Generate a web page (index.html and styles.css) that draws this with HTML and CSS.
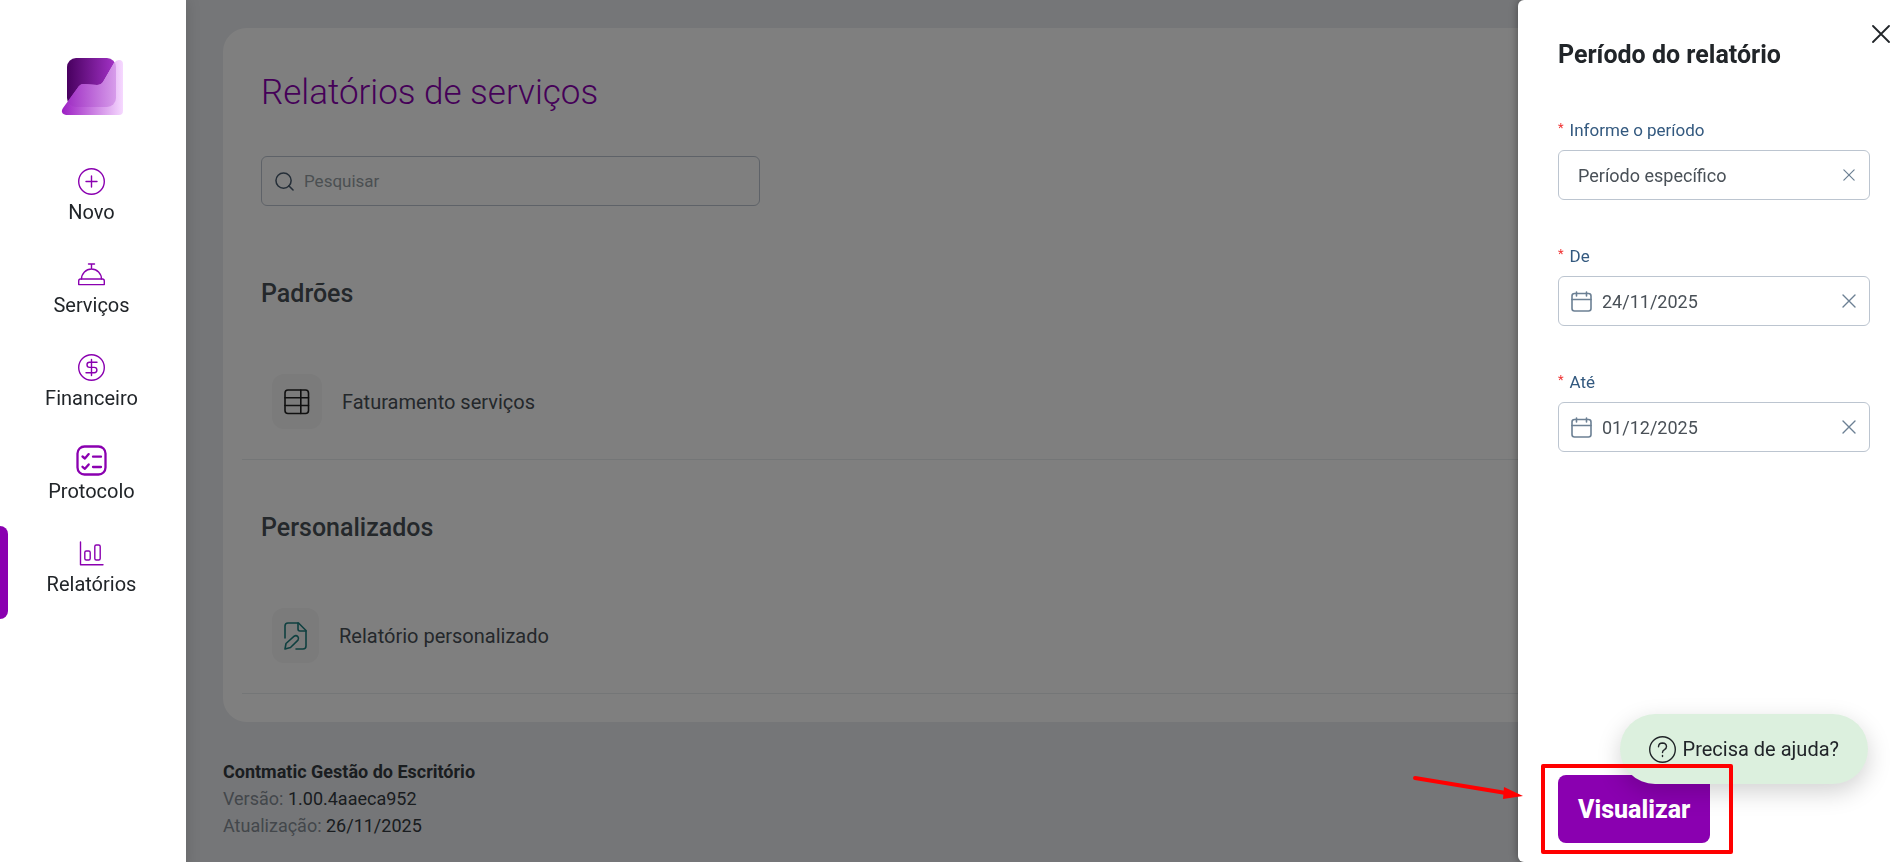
FILE: index.html
```html
<!DOCTYPE html>
<html lang="pt-BR">
<head>
    <meta charset="UTF-8">
    <meta name="viewport" content="width=device-width, initial-scale=1.0">
    <title>Relatórios de serviços</title>
    <link rel="stylesheet" href="styles.css">
</head>
<body>

<!-- Sidebar -->
<aside class="sidebar">
    <a href="#" class="logo" aria-label="Início">
        <svg width="62" height="58" viewBox="0 0 62 58">
            <defs>
                <linearGradient id="logo-back" x1="0" x2="1">
                    <stop offset="0" stop-color="#48005f"/>
                    <stop offset="1" stop-color="#a433c8"/>
                </linearGradient>
                <linearGradient id="logo-front" x1="0" x2="1">
                    <stop offset="0" stop-color="#9c1fc3"/>
                    <stop offset="1" stop-color="#f6d9ff"/>
                </linearGradient>
                <linearGradient id="logo-mix" x1="0" x2="1">
                    <stop offset="0" stop-color="#9a24c0"/>
                    <stop offset="1" stop-color="#dfacf0"/>
                </linearGradient>
                <clipPath id="logo-clip">
                    <rect x="6" y="0" width="49" height="49" rx="9"/>
                </clipPath>
            </defs>
            <rect x="6" y="0" width="49" height="49" rx="9" fill="url(#logo-back)"/>
            <path d="M2 50 L18 28 Q20 26 22 26 L36 27 Q40 27 42 24 L53 5 Q55 2 58 2 Q62 2 62 6 V53 Q62 57 58 57 H5 Q0 56 1 52 Z" fill="url(#logo-front)"/>
            <path d="M2 50 L18 28 Q20 26 22 26 L36 27 Q40 27 42 24 L53 5 Q55 2 58 2 Q62 2 62 6 V53 Q62 57 58 57 H5 Q0 56 1 52 Z" fill="url(#logo-mix)" clip-path="url(#logo-clip)"/>
        </svg>
    </a>
    <nav class="menu">
        <a href="#" class="menu-item">
            <svg class="menu-icon" viewBox="0 0 27 27">
                <circle cx="13.5" cy="13.5" r="12.8"/>
                <path d="M13.5 8v11M8 13.5h11"/>
            </svg>
            Novo
        </a>
        <a href="#" class="menu-item">
            <svg class="menu-icon" viewBox="0 0 27 27">
                <path d="M10.5 3h6M13.5 3v5M3.5 18a10 10 0 0 1 20 0"/>
                <path d="M2.6 18h21.8q1.9 0 1.9 2v3.6H.7V20q0-2 1.9-2z"/>
            </svg>
            Serviços
        </a>
        <a href="#" class="menu-item">
            <svg class="menu-icon" viewBox="0 0 27 27">
                <circle cx="13.5" cy="13.5" r="12.8"/>
                <path d="M13.5 5.5v16M19 8.2h-7.4a2.6 2.6 0 0 0 0 5.2h4.6a2.7 2.7 0 0 1 0 5.4H8"/>
            </svg>
            Financeiro
        </a>
        <a href="#" class="menu-item">
            <svg class="menu-icon menu-icon-large" viewBox="0 0 27 27">
                <rect x="-.5" y="-.5" width="28" height="28" rx="7"/>
                <path d="M4.500 9.500l2.400 2 3.800-4.400M4.500 19.800l2.400 2 3.800-4.400M15 9.700h8M15 20h8"/>
            </svg>
            Protocolo
        </a>
        <a href="#" class="menu-item active">
            <svg class="menu-icon" viewBox="0 0 27 27">
                <path d="M2.500 2v22.700H25"/>
                <rect x="6.800" y="11" width="5.400" height="9" rx="1.500"/>
                <rect x="16.800" y="5" width="5.400" height="15" rx="1.500"/>
            </svg>
            Relatórios
        </a>
    </nav>
</aside>

<!-- Page content -->
<main class="content">
    <section class="card">
        <h1>Relatórios de serviços</h1>
        <div class="search">
            <svg width="19" height="19" viewBox="0 0 20 20">
                <circle cx="9" cy="9" r="8"/>
                <path d="M14.5 14.5L19 19"/>
            </svg>
            <input type="text" placeholder="Pesquisar" aria-label="Pesquisar">
        </div>

        <h2>Padrões</h2>
        <a href="#" class="report">
            <span class="report-icon">
                <svg width="26" height="26" viewBox="0 0 26 26">
                    <rect x="1" y="1" width="23.500" height="23.500" rx="3"/>
                    <path d="M1 8.700h23.500M1 16.500h23.500M16.800 1v23.500"/>
                </svg>
            </span>
            Faturamento serviços
        </a>

        <h2>Personalizados</h2>
        <a href="#" class="report">
            <span class="report-icon report-icon-custom">
                <svg width="23" height="28" viewBox="0 0 23 28">
                    <path d="M1 16V4q0-3 3-3h10.500l7.500 7.500V24q0 3-3 3h-7"/>
                    <path d="M14 1v6q0 2 2 2h6"/>
                    <path d="M1 27l1-5.500 8.200-7.300q2-1.200 3.600.4 1.400 1.700.2 3.500L6.500 25.500z"/>
                </svg>
            </span>
            Relatório personalizado
        </a>
    </section>

    <footer class="version">
        <strong>Contmatic Gestão do Escritório</strong>
        <p><span>Versão:</span> 1.00.4aaeca952</p>
        <p><span>Atualização:</span> 26/11/2025</p>
    </footer>
</main>

<div class="overlay"></div>

<!-- Report period drawer -->
<form class="drawer">
    <button type="button" class="close" aria-label="Fechar">
        <svg width="18" height="18" viewBox="0 0 18 18"><path d="M1 1l16 16M17 1L1 17"/></svg>
    </button>
    <h3>Período do relatório</h3>

    <div class="field">
        <label for="periodo"><sup>*</sup>Informe o período</label>
        <div class="control">
            <select id="periodo">
                <option>Período específico</option>
            </select>
            <button type="button" class="clear" aria-label="Limpar período">
                <svg width="12" height="12" viewBox="0 0 14 14"><path d="M1 1l12 12M13 1L1 13"/></svg>
            </button>
        </div>
    </div>

    <div class="field">
        <label for="de"><sup>*</sup>De</label>
        <div class="control control-date">
            <svg class="calendar" width="21" height="21" viewBox="0 0 21 21">
                <rect x="1" y="2.500" width="19" height="17.500" rx="2.500"/>
                <path d="M1 8.500h19M5.500 1v4M15.500 1v4"/>
            </svg>
            <input type="text" id="de" value="24/11/2025">
            <button type="button" class="clear" aria-label="Limpar data inicial">
                <svg width="14" height="14" viewBox="0 0 14 14"><path d="M1 1l12 12M13 1L1 13"/></svg>
            </button>
        </div>
    </div>

    <div class="field">
        <label for="ate"><sup>*</sup>Até</label>
        <div class="control control-date">
            <svg class="calendar" width="21" height="21" viewBox="0 0 21 21">
                <rect x="1" y="2.500" width="19" height="17.500" rx="2.500"/>
                <path d="M1 8.500h19M5.500 1v4M15.500 1v4"/>
            </svg>
            <input type="text" id="ate" value="01/12/2025">
            <button type="button" class="clear" aria-label="Limpar data final">
                <svg width="14" height="14" viewBox="0 0 14 14"><path d="M1 1l12 12M13 1L1 13"/></svg>
            </button>
        </div>
    </div>

    <div class="actions">
        <button type="submit" class="submit">Visualizar</button>
    </div>
</form>

<button type="button" class="help">
    <svg width="27" height="27" viewBox="0 0 27 27">
        <circle cx="13.500" cy="13.500" r="12.800"/>
        <path d="M9.500 10.800q.2-3.800 4-3.800 3.900.2 4 3.600 0 1.900-2 3-2 1-2 3"/>
        <path d="M13.500 19.500v1"/>
    </svg>
    Precisa de ajuda?
</button>

<!-- Click marker -->
<div class="highlight">
    <svg class="arrow" width="112" height="28" viewBox="0 0 112 28">
        <path d="M3 4L94 19" stroke="#ff0000" stroke-width="4"/>
        <path d="M92 13L111 22L91 25Z" fill="#ff0000"/>
    </svg>
</div>

</body>
</html>
```

FILE: styles.css
```css
* {
    box-sizing: border-box;
}
body {
    font-family: Roboto, Arial, sans-serif;
    font-size: 18px;
    color: #212529;
    display: flex;
    min-height: 100vh;
    margin: 0;
    background-color: #ebedf1;
    overflow: hidden;
}
a {
    color: inherit;
    text-decoration: none;
}
button {
    font-family: inherit;
    border: none;
    background: none;
    cursor: pointer;
}
svg {
    fill: none;
    stroke-linecap: round;
    stroke-linejoin: round;
    flex-shrink: 0;
}

/* Sidebar */
.sidebar {
    position: relative;
    z-index: 2;
    flex: 0 0 186px;
    background: #fff;
    box-shadow: 0 0 14px rgba(0, 0, 0, 0.15);
}
.logo {
    display: flex;
    justify-content: center;
    padding: 58px 3px 38px 0;
}
.logo svg {
    display: block;
}
.menu-item {
    position: relative;
    display: flex;
    flex-direction: column;
    align-items: center;
    gap: 5px;
    height: 93px;
    padding: 14px 3px 0 0;
    font-size: 20px;
    line-height: 24px;
}
.menu-icon {
    width: 27px;
    height: 27px;
    overflow: visible;
    stroke: #8a00b0;
    stroke-width: 1.4;
}
.menu-icon-large {
    stroke-width: 2.3;
}
.menu-item.active::before {
    content: "";
    position: absolute;
    left: 0;
    top: 0;
    width: 8px;
    height: 100%;
    background: #8a00b0;
    border-radius: 0 8px 8px 0;
}

/* Content */
.content {
    flex: 1;
    padding: 28px 37px;
}
.card {
    background: #fff;
    border-radius: 24px;
    padding: 43px 19px 28px;
}
.card h1 {
    margin: 0 19px 41px;
    font-size: 35px;
    font-weight: 300;
    line-height: 44px;
    color: #8a00b0;
}
.search {
    display: flex;
    align-items: center;
    gap: 10px;
    max-width: 499px;
    height: 50px;
    margin: 0 19px 73px;
    padding: 0 13px;
    border: 1px solid #bcc5d0;
    border-radius: 6px;
}
.search svg {
    stroke: #4a5d70;
    stroke-width: 1.6;
}
.search input {
    flex: 1;
    padding: 0;
    border: none;
    outline: none;
    background: none;
    font: inherit;
    font-size: 17px;
}
.search input::placeholder {
    color: #979fa5;
    opacity: 1;
}
.card h2 {
    margin: 0 19px;
    font-size: 25px;
    font-weight: 500;
    line-height: 30px;
    color: #495057;
}
.report {
    display: flex;
    align-items: center;
    gap: 20px;
    padding: 65px 30px 30px;
    border-bottom: 1px solid #e9ecef;
    font-size: 20px;
    color: #495057;
}
.report + h2 {
    margin-top: 53px;
}
.report-icon {
    display: flex;
    align-items: center;
    padding: 0 12px;
    height: 55px;
    background: #f6f6f6;
    border-radius: 12px;
    stroke: #212121;
    stroke-width: 1.6;
}
.report-icon-custom {
    stroke: #1f8080;
}
.version {
    padding-top: 36px;
    line-height: 27px;
    color: #343a40;
}
.version strong {
    font-weight: 700;
}
.version p {
    margin: 0;
}
.version span {
    color: #868e96;
}
.overlay {
    position: fixed;
    inset: 0;
    z-index: 1;
    background: rgba(0, 0, 0, 0.5);
}

/* Drawer */
.drawer {
    position: fixed;
    top: 0;
    right: 0;
    bottom: 0;
    z-index: 3;
    display: flex;
    flex-direction: column;
    width: 386px;
    padding: 39px 34px 19px 40px;
    background: #fff;
    border-radius: 6px 0 0 6px;
    box-shadow: 0 0 8px rgba(0, 0, 0, 0.4);
}
.drawer h3 {
    margin: 0 0 45px;
    font-size: 25px;
    font-weight: 700;
    line-height: 32px;
}
.close {
    position: absolute;
    top: 25px;
    right: 14px;
    padding: 0;
    stroke: #212529;
    stroke-width: 1.8;
}
.close svg,
.clear svg {
    display: block;
}
.field {
    margin-bottom: 42px;
}
.field label {
    display: flex;
    gap: 6px;
    height: 28px;
    margin-bottom: 6px;
    font-size: 17px;
    line-height: 28px;
    color: #33597f;
}
.field sup {
    font-size: 13px;
    line-height: 24px;
    color: #f03030;
}
.control {
    display: flex;
    align-items: center;
    height: 50px;
    padding: 0 13px 0 19px;
    border: 1px solid #bcc5d0;
    border-radius: 6px;
}
.control-date {
    gap: 10px;
    padding-left: 12px;
}
.control select,
.control input {
    flex: 1;
    min-width: 0;
    padding: 0;
    border: none;
    outline: none;
    background: none;
    font: inherit;
    color: #495057;
    appearance: none;
}
.calendar {
    stroke: #6c8094;
    stroke-width: 1.6;
}
.clear {
    display: flex;
    align-items: center;
    justify-content: center;
    width: 14px;
    padding: 0;
    stroke: #6c8094;
    stroke-width: 1.4;
}
.actions {
    margin-top: auto;
}
.submit {
    display: block;
    height: 68px;
    padding: 0 20px;
    background: #8a00b0;
    border-radius: 8px;
    color: #fff;
    font-size: 25px;
    font-weight: 800;
}

/* Help button */
.help {
    position: fixed;
    right: 36px;
    bottom: 78px;
    z-index: 4;
    display: flex;
    align-items: center;
    gap: 7px;
    height: 70px;
    padding: 0 29px;
    background: #dcf0de;
    border-radius: 35px;
    box-shadow: 0 8px 24px rgba(0, 0, 0, 0.18);
    font-size: 20px;
    color: #212529;
}
.help svg {
    stroke: #212529;
    stroke-width: 1.4;
}

/* Click marker around the submit button */
.highlight {
    position: fixed;
    right: 171px;
    bottom: 8px;
    z-index: 5;
    width: 192px;
    height: 90px;
    border: 4px solid #ff0000;
    border-radius: 2px;
    pointer-events: none;
}
.arrow {
    position: absolute;
    left: -133px;
    top: 6px;
}
```
